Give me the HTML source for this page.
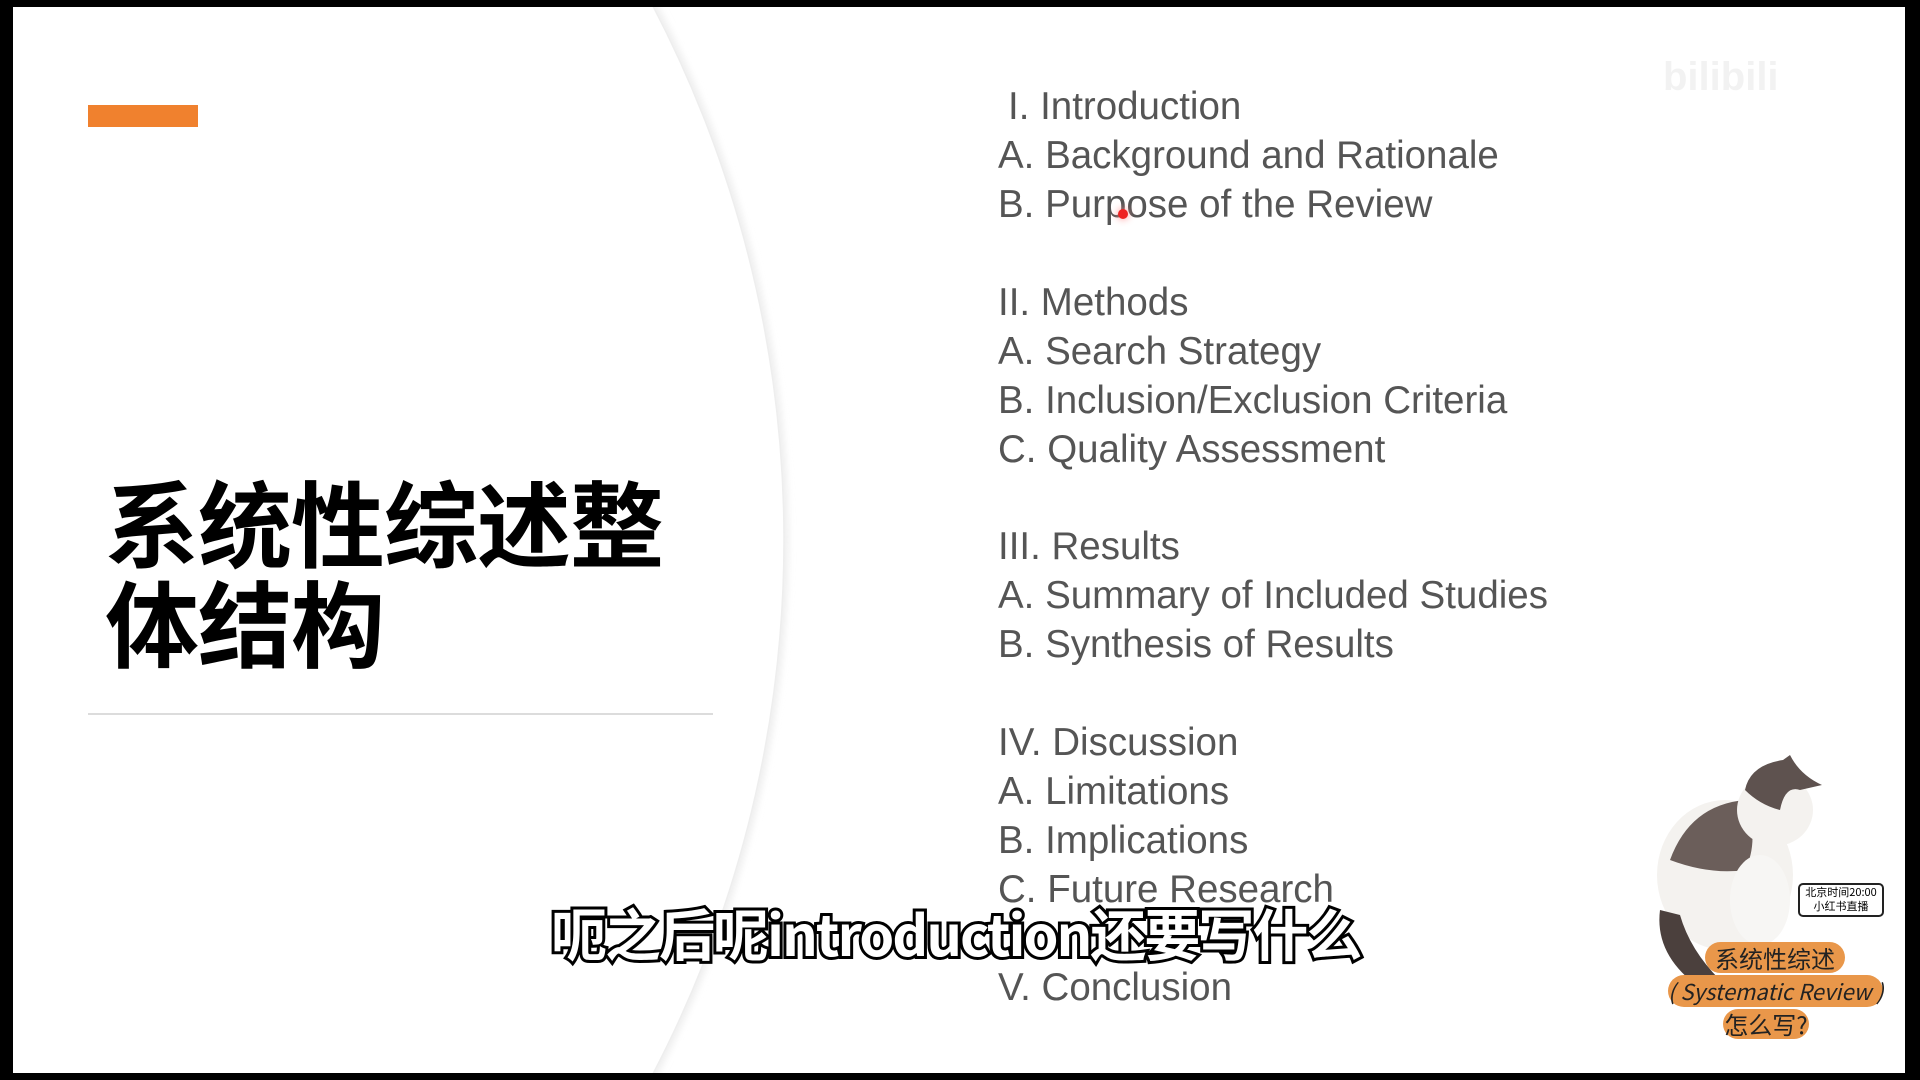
<!DOCTYPE html>
<html><head><meta charset="utf-8"><style>
html,body{margin:0;padding:0;overflow:hidden;width:1920px;height:1080px}
body{background:#000;position:relative;overflow:hidden;font-family:"Liberation Sans","Noto Sans CJK SC",sans-serif}
#slide{position:absolute;left:13px;top:7px;width:1892px;height:1066px;background:#fff;overflow:hidden}
.bar{position:absolute;left:75px;top:98px;width:110px;height:22px;background:#f0812e}
.title{position:absolute;left:92px;top:463px;font-family:"Noto Sans CJK SC",sans-serif;font-weight:700;font-size:94px;line-height:100px;color:#000;letter-spacing:-1px}
.div{position:absolute;left:75px;top:706px;width:625px;height:2px;background:#dcdcdc}
.list{position:absolute;left:985px;top:0;color:#555;font-size:38.5px}
.list div{position:absolute;white-space:nowrap;left:0;line-height:40px}
.sub{position:absolute;left:538px;top:891px;font-family:"Noto Sans CJK SC",sans-serif;font-weight:700;font-size:56px;line-height:70px;color:#fff;white-space:nowrap;-webkit-text-stroke:6px #000;paint-order:stroke fill;letter-spacing:-2px}
.lab{position:absolute;background:#e9974a;border-radius:18px;color:#222;font-family:"Noto Sans CJK SC",sans-serif;text-align:center;white-space:nowrap}
.wm{position:absolute;top:48px;left:1650px;color:#f2f2f2;font-size:40px;font-weight:700}
</style></head><body>
<div id="slide">
<svg style="position:absolute;left:0;top:0" width="1892" height="1066">
<defs><filter id="b"><feGaussianBlur stdDeviation="4"/></filter></defs>
<circle cx="-382" cy="533" r="1153" fill="none" stroke="#e6e6e6" stroke-width="6" filter="url(#b)"/>
<circle cx="-382" cy="533" r="1153" fill="#fff" stroke="#eeeeee" stroke-width="1.5"/>
</svg>
<div class="bar"></div>
<div class="title">系统性综述整<br>体结构</div>
<div class="div"></div>
<div class="wm">bilibili</div>
<div class="list">
<div style="top:80px;left:10px">I. Introduction</div>
<div style="top:129px">A. Background and Rationale</div>
<div style="top:178px">B. Purpose of the Review</div>
<div style="top:276px">II. Methods</div>
<div style="top:325px">A. Search Strategy</div>
<div style="top:374px">B. Inclusion/Exclusion Criteria</div>
<div style="top:423px">C. Quality Assessment</div>
<div style="top:520px">III. Results</div>
<div style="top:569px">A. Summary of Included Studies</div>
<div style="top:618px">B. Synthesis of Results</div>
<div style="top:716px">IV. Discussion</div>
<div style="top:765px">A. Limitations</div>
<div style="top:814px">B. Implications</div>
<div style="top:863px">C. Future Research</div>
<div style="top:961px">V. Conclusion</div>
</div>
<div style="position:absolute;left:1105px;top:202px;width:10px;height:10px;border-radius:50%;background:#e22;box-shadow:0 0 8px #f88"></div>
<svg style="position:absolute;left:1637px;top:743px" width="200" height="235" viewBox="0 0 200 235">
<ellipse cx="75" cy="125" rx="68" ry="75" fill="#f4f2ef"/>
<path d="M20 110 Q40 55 95 50 Q110 90 95 120 Q60 125 20 110Z" fill="#6b5e5a"/>
<path d="M10 160 Q5 200 40 230 L70 230 Q40 200 30 165Z" fill="#4b403d"/>
<ellipse cx="125" cy="60" rx="38" ry="36" fill="#f4f2ef"/>
<path d="M95 40 Q100 15 133 10 L140 5 Q150 25 172 35 L150 40 Q135 35 130 60 Q110 55 95 40Z" fill="#5e524f"/>
<ellipse cx="110" cy="150" rx="30" ry="45" fill="#f7f6f4"/>
</svg>
<div style="position:absolute;left:1785px;top:876px;width:82px;height:30px;border:2px solid #222;border-radius:5px;background:#fff;font-size:11px;line-height:14px;text-align:center;font-family:'Noto Sans CJK SC',sans-serif">北京时间20:00<br>小红书直播</div>
<div class="lab" style="left:1692px;top:935px;width:140px;height:31px;font-size:24px;line-height:31px">系统性综述</div>
<div class="lab" style="left:1655px;top:968px;width:215px;height:32px;font-size:22px;line-height:32px;font-style:italic">( Systematic Review )</div>
<div class="lab" style="left:1710px;top:1002px;width:86px;height:30px;font-size:24px;line-height:30px">怎么写?</div>
<div class="sub">呃之后呢introduction还要写什么</div>
</div>
</body></html>
